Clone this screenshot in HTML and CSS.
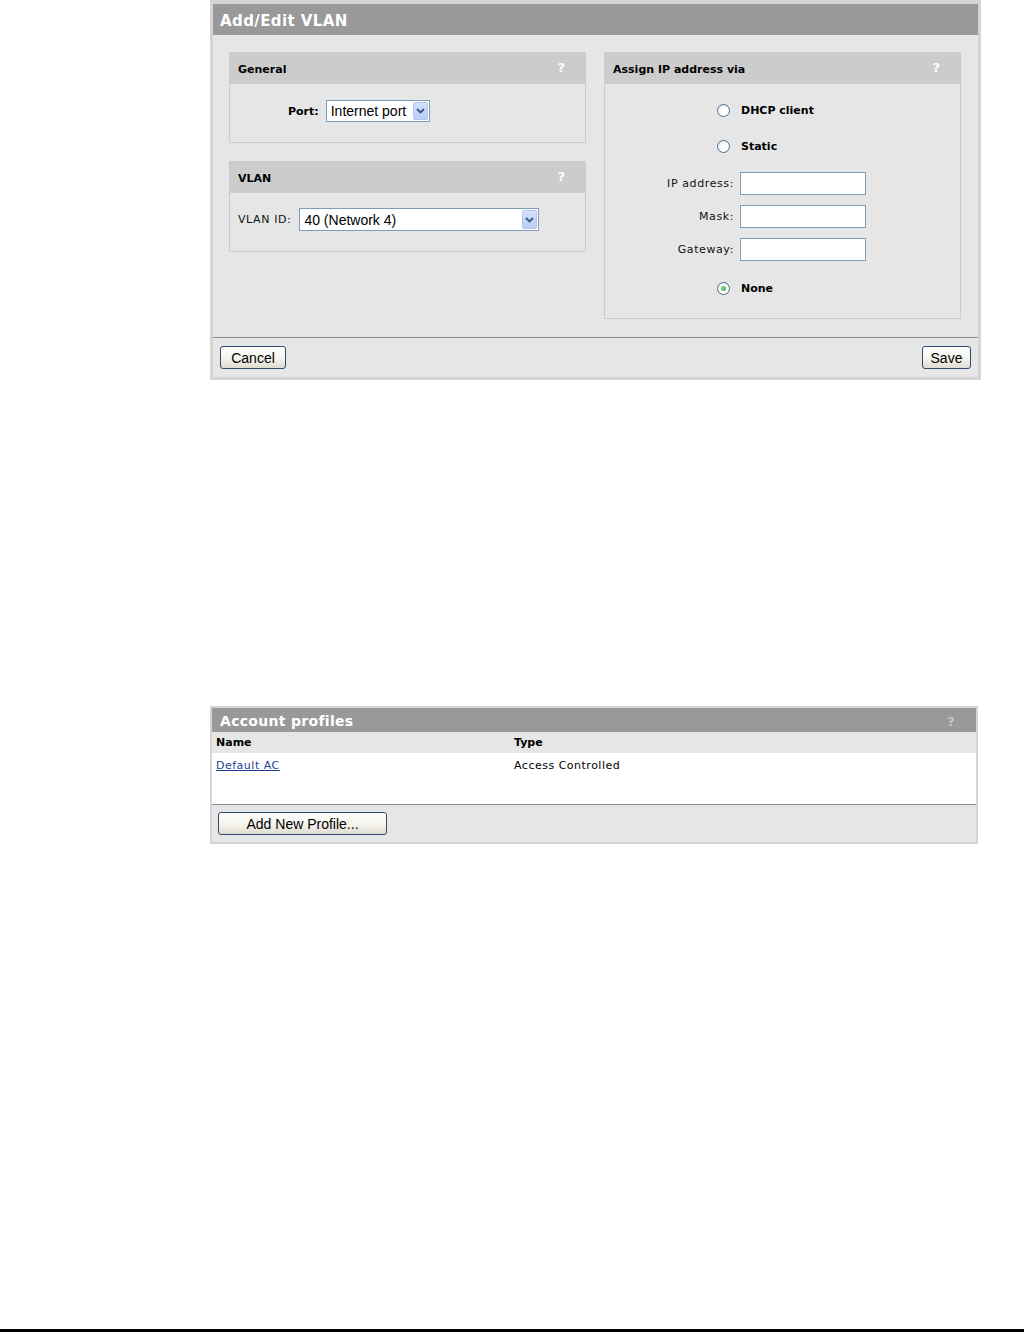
FILE: index.html
```html
<!DOCTYPE html>
<html lang="en">
<head>
  <meta charset="UTF-8">
  <title>Add/Edit VLAN</title>
  <link rel="stylesheet" href="styles.css">
</head>
<body>
<div class="page">

  <div class="dialog vlan-dialog">
    <div class="dialog-title">Add/Edit VLAN</div>
    <div class="dialog-body">
      <div class="column">
        <div class="panel">
          <div class="panel-head"><span>General</span><span class="help">?</span></div>
          <div class="panel-body port-body">
            <label class="bold-label">Port:</label>
            <div class="select port-select">
              <select><option>Internet port</option></select>
              <span class="select-btn"><svg width="9" height="6" viewBox="0 0 9 6"><path d="M1 1 L4.5 4.5 L8 1" fill="none" stroke="#3f5480" stroke-width="1.8"/></svg></span>
            </div>
          </div>
        </div>
        <div class="panel">
          <div class="panel-head"><span>VLAN</span><span class="help">?</span></div>
          <div class="panel-body vlan-body">
            <label class="field-label">VLAN ID:</label>
            <div class="select vlan-select">
              <select><option>40 (Network 4)</option></select>
              <span class="select-btn"><svg width="9" height="6" viewBox="0 0 9 6"><path d="M1 1 L4.5 4.5 L8 1" fill="none" stroke="#3f5480" stroke-width="1.8"/></svg></span>
            </div>
          </div>
        </div>
      </div>

      <div class="panel ip-panel">
        <div class="panel-head"><span>Assign IP address via</span><span class="help">?</span></div>
        <div class="panel-body ip-body">
          <div class="row radio-row first">
            <span class="radio"></span>
            <span class="bold-label">DHCP client</span>
          </div>
          <div class="row radio-row">
            <span class="radio"></span>
            <span class="bold-label">Static</span>
          </div>
          <div class="row">
            <label class="field-label">IP address:</label>
            <input type="text" class="text-input">
          </div>
          <div class="row">
            <label class="field-label">Mask:</label>
            <input type="text" class="text-input">
          </div>
          <div class="row">
            <label class="field-label">Gateway:</label>
            <input type="text" class="text-input">
          </div>
          <div class="row radio-row last">
            <span class="radio checked"></span>
            <span class="bold-label">None</span>
          </div>
        </div>
      </div>
    </div>
    <div class="dialog-foot">
      <button type="button" class="cancel-btn">Cancel</button>
      <button type="button" class="save-btn">Save</button>
    </div>
  </div>

  <div class="dialog profiles-dialog">
    <div class="dialog-title small"><span>Account profiles</span><span class="help">?</span></div>
    <table class="profiles">
      <thead>
        <tr><th class="name-col">Name</th><th>Type</th></tr>
      </thead>
      <tbody>
        <tr><td class="name-col"><a href="#">Default AC</a></td><td>Access Controlled</td></tr>
      </tbody>
    </table>
    <div class="dialog-foot">
      <button type="button" class="wide-btn">Add New Profile...</button>
    </div>
  </div>

  <div class="page-rule"></div>
</div>
</body>
</html>
```

FILE: styles.css
```css
body {
  margin: 0;
  background-color: white;
  font-family: "DejaVu Sans", Verdana, sans-serif;
  font-size: 11px;
  color: #000;
}
.page {
  height: 1332px;
  display: flex;
  flex-direction: column;
  align-items: flex-start;
}
.dialog {
  box-sizing: border-box;
  background-color: #e6e6e6;
}
.vlan-dialog {
  margin-left: 210px;
  width: 771px;
  border: 3px solid #d4d4d4;
  border-top-width: 4px;
}
.dialog-title {
  height: 31px;
  background-color: #999;
  color: white;
  font-weight: bold;
  font-size: 15px;
  letter-spacing: 0.4px;
  padding-left: 7px;
  padding-top: 2px;
  box-sizing: border-box;
  display: flex;
  align-items: center;
  justify-content: space-between;
}
.dialog-title.small {
  height: 24px;
  font-size: 14px;
  letter-spacing: 0.3px;
  padding-left: 8px;
  padding-right: 21px;
}
.dialog-title .help {
  color: #c4c4c4;
  font-size: 13px;
}
.dialog-body {
  display: grid;
  grid-template-columns: 357px 357px;
  column-gap: 18px;
  align-items: start;
  padding: 17px 17px 18px 16px;
}
.column {
  display: flex;
  flex-direction: column;
  gap: 18px;
}
.panel {
  box-sizing: border-box;
  border: 1px solid #cbcbcb;
}
.panel-head {
  height: 31px;
  background-color: #cccccc;
  display: flex;
  align-items: center;
  justify-content: space-between;
  padding: 1px 20px 0 8px;
  box-sizing: border-box;
  font-weight: bold;
}
.panel-head .help {
  color: white;
  font-size: 13px;
  margin-top: -4px;
}
.panel-body {
  display: flex;
  align-items: center;
}
.port-body {
  padding: 16px 0 20px 58px;
  gap: 7px;
}
.vlan-body {
  padding: 15px 0 20px 8px;
  gap: 8px;
}
.bold-label {
  font-weight: bold;
}
.field-label {
  letter-spacing: 0.6px;
  color: #111;
}
.select {
  box-sizing: border-box;
  display: flex;
  align-items: stretch;
  background-color: white;
  border: 1px solid #7f9db9;
  padding: 1px;
}
.port-select {
  width: 104px;
  height: 22px;
}
.vlan-select {
  width: 240px;
  height: 23px;
}
.select select {
  appearance: none;
  -webkit-appearance: none;
  border: none;
  background: transparent;
  flex: 1;
  min-width: 0;
  padding: 0 0 0 3px;
  font-family: "Liberation Sans", Arial, sans-serif;
  font-size: 14px;
  color: #000;
  outline: none;
}
.select-btn {
  width: 15px;
  display: flex;
  align-items: center;
  justify-content: center;
  background: linear-gradient(#d3e0fd, #b9cdf7);
  border: 1px solid #b4c6ee;
  border-radius: 2px;
  box-sizing: border-box;
}
.ip-body {
  display: flex;
  flex-direction: column;
  align-items: stretch;
  gap: 10px;
  padding: 15px 0 18px 0;
}
.row {
  display: grid;
  grid-template-columns: 129px 1fr;
  column-gap: 6px;
  height: 23px;
  align-items: center;
}
.row .field-label {
  text-align: right;
}
.radio-row {
  margin-bottom: 4px;
}
.radio-row.first {
  margin-bottom: 3px;
}
.radio-row.last {
  margin-top: 6px;
  margin-bottom: 0;
}
.radio {
  justify-self: end;
  margin-right: 4px;
  width: 13px;
  height: 13px;
  box-sizing: border-box;
  border-radius: 50%;
  border: 1px solid #4b6f93;
  background: radial-gradient(circle at 60% 60%, #ffffff 35%, #e4e7ea 80%);
  display: flex;
  align-items: center;
  justify-content: center;
}
.radio.checked::after {
  content: "";
  width: 5px;
  height: 5px;
  border-radius: 50%;
  background: radial-gradient(circle at 40% 40%, #7fdc8a, #2ea043);
}
.radio-row .bold-label {
  padding-left: 1px;
}
.text-input {
  box-sizing: border-box;
  width: 126px;
  height: 23px;
  border: 1px solid #7f9db9;
  background-color: white;
  margin: 0;
}
.dialog-foot {
  border-top: 1px solid #8e8e8e;
  display: flex;
  justify-content: space-between;
  padding: 8px 7px;
}
button {
  box-sizing: border-box;
  height: 23px;
  padding: 0;
  border: 1px solid #2d4a70;
  border-radius: 3px;
  background: linear-gradient(#ffffff, #f2f1ea 60%, #dedbd0);
  font-family: "Liberation Sans", Arial, sans-serif;
  font-size: 14px;
  color: #000;
}
.cancel-btn {
  width: 66px;
}
.save-btn {
  width: 49px;
}
.profiles-dialog {
  margin-left: 210px;
  margin-top: 326px;
  width: 768px;
  border: 2px solid #d4d4d4;
}
.profiles {
  width: 100%;
  border-collapse: collapse;
}
.profiles th {
  height: 21px;
  text-align: left;
  font-weight: bold;
  padding: 0 4px;
  background-color: #e6e6e6;
}
.profiles td {
  height: 51px;
  vertical-align: top;
  padding: 6px 4px 0 4px;
  box-sizing: border-box;
  background-color: white;
  letter-spacing: 0.5px;
}
.profiles .name-col {
  width: 290px;
}
.profiles a {
  color: #1f3f8f;
}
.profiles-dialog .dialog-foot {
  padding: 7px 6px;
  justify-content: flex-start;
}
.wide-btn {
  width: 169px;
}
.page-rule {
  margin-top: auto;
  align-self: stretch;
  height: 3px;
  background-color: black;
}
```
